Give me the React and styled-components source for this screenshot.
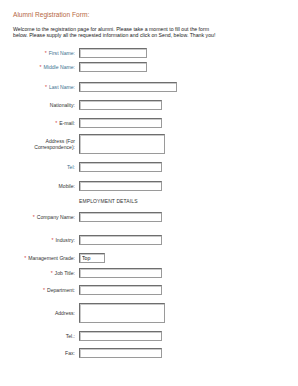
import React from 'react';
import styled, { createGlobalStyle } from 'styled-components';

const GlobalStyle = createGlobalStyle`
  html, body {
    margin: 0;
    padding: 0;
    background: #ffffff;
  }
  body {
    font-family: "Liberation Sans", Arial, sans-serif;
  }
`;

const Page = styled.div`
  width: 298px;
  height: 386px;
  box-sizing: border-box;
  padding: 11px 0 0 13px;
  background: #fff;
  overflow: hidden;
`;

const Title = styled.h1`
  margin: 0;
  font-size: 6.6px;
  line-height: 8px;
  font-weight: normal;
  color: #b6683f;
`;

const Intro = styled.p`
  margin: 7px 0 0;
  font-size: 5.2px;
  line-height: 6px;
  color: #222;
  white-space: nowrap;
`;

const Form = styled.form`
  display: flex;
  flex-direction: column;
`;

const Row = styled.div`
  display: grid;
  grid-template-columns: 62px auto;
  column-gap: 4px;
  align-items: center;
  justify-items: start;
  margin-top: ${(p) => p.$mt}px;
`;

const Label = styled.label`
  justify-self: end;
  text-align: right;
  font-size: 5.1px;
  line-height: 6px;
  color: ${(p) => (p.$blue ? '#41708f' : '#333')};
  white-space: nowrap;
`;

const Star = styled.span`
  color: #d03a3a;
  margin-right: 2px;
`;

const Field = styled.input`
  box-sizing: border-box;
  display: block;
  width: ${(p) => p.$w}px;
  height: 10px;
  margin: 0;
  padding: 0 2px;
  border: 1px solid #6e6e6e;
  border-bottom-color: #9a9a9a;
  border-right-color: #9a9a9a;
  box-shadow: inset 1px 1px 0 #c8c8c8;
  background: #fff;
  font-family: "Liberation Sans", Arial, sans-serif;
  font-size: 5.2px;
  color: #111;
  outline: none;
`;

const Area = styled.textarea`
  box-sizing: border-box;
  width: 86px;
  height: 20px;
  margin: 0;
  padding: 0;
  border: 1px solid #6e6e6e;
  border-bottom-color: #9a9a9a;
  border-right-color: #9a9a9a;
  box-shadow: inset 1px 1px 0 #c8c8c8;
  resize: none;
  display: block;
`;

const Section = styled.div`
  grid-column: 2;
  font-size: 5px;
  line-height: 6px;
  color: #333;
  letter-spacing: 0.1px;
`;

const fields1 = [
  { label: 'First Name:', req: true, blue: true, w: 68, mt: 10 },
  { label: 'Middle Name:', req: true, blue: true, w: 68, mt: 4 },
  { label: 'Last Name:', req: true, blue: true, w: 98, mt: 10 },
  { label: 'Nationality:', w: 83, mt: 8 },
  { label: 'E-mail:', req: true, w: 83, mt: 8 },
  { label: ['Address (For', 'Correspondence):'], area: true, mt: 6 },
  { label: 'Tel:', blue: true, w: 83, mt: 8 },
  { label: 'Mobile:', w: 83, mt: 9 },
];

const fields2 = [
  { label: 'Company Name:', req: true, w: 83, mt: 8 },
  { label: 'Industry:', req: true, w: 83, mt: 13 },
  { label: 'Management Grade:', req: true, w: 26, mt: 8, value: 'Top' },
  { label: 'Job Title:', req: true, w: 83, mt: 5 },
  { label: 'Department:', req: true, w: 83, mt: 7 },
  { label: 'Address:', area: true, mt: 8 },
  { label: 'Tel.:', w: 83, mt: 8 },
  { label: 'Fax:', w: 83, mt: 7 },
];

function FieldRow({ f }) {
  return (
    <Row $mt={f.mt}>
      <Label $blue={f.blue}>
        {f.req && <Star>*</Star>}
        {Array.isArray(f.label)
          ? f.label.map((l, i) => (
              <React.Fragment key={i}>
                {i > 0 && <br />}
                {l}
              </React.Fragment>
            ))
          : f.label}
      </Label>
      {f.area ? (
        <Area />
      ) : (
        <Field $w={f.w} defaultValue={f.value || ''} readOnly={!!f.value} />
      )}
    </Row>
  );
}

export default function App() {
  return (
    <>
      <GlobalStyle />
      <Page>
        <Title>Alumni Registration Form:</Title>
        <Intro>
          Welcome to the registration page for alumni. Please take a moment to fill out the form
          <br />
          below. Please supply all the requested information and click on Send, below. Thank you!
        </Intro>
        <Form>
          {fields1.map((f, i) => (
            <FieldRow key={i} f={f} />
          ))}
          <Row $mt={7}>
            <Section>EMPLOYMENT DETAILS</Section>
          </Row>
          {fields2.map((f, i) => (
            <FieldRow key={i} f={f} />
          ))}
        </Form>
      </Page>
    </>
  );
}
